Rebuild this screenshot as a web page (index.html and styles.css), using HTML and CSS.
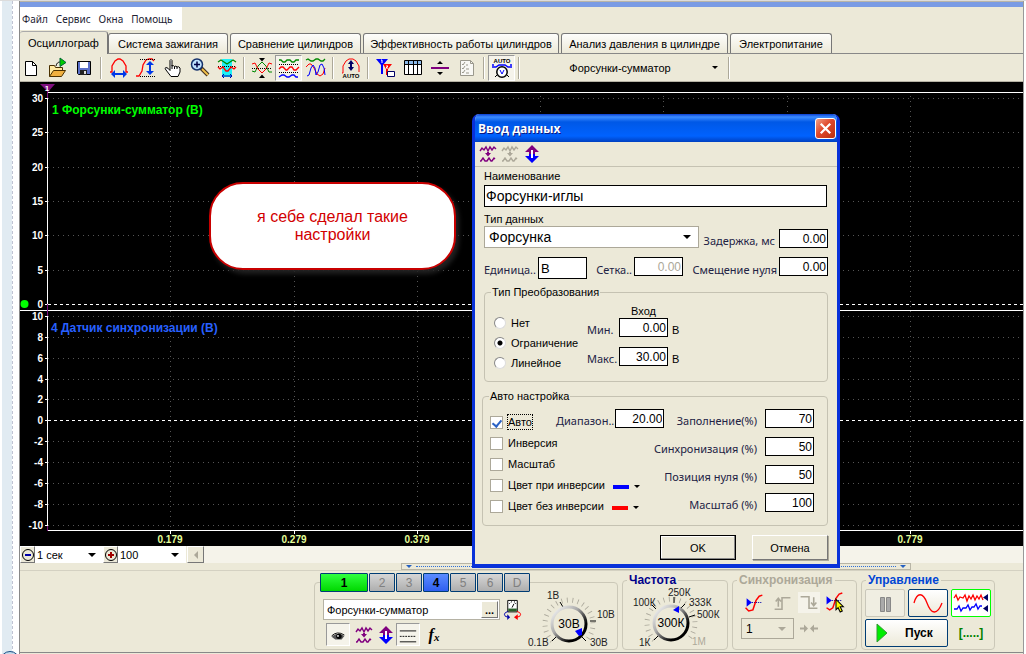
FILE: index.html
```html
<!DOCTYPE html>
<html lang="ru">
<head>
<meta charset="utf-8">
<title>Осциллограф</title>
<link rel="stylesheet" href="styles.css">
</head>
<body>
<svg class="defs" aria-hidden="true">
  <symbol id="i-waves" viewBox="0 0 18 18"><g fill="none" stroke="currentColor" stroke-width="1.4"><path d="M1 6l2-3 2 2 2-3 2 4 2-4 2 3 2-3 2 2"/><path d="M1 16h1l2-3 2 3h2l2-3 2 3h1l2-3 1 1"/></g><path d="M8 7h2v1h2L9 11.500 6 8h2z" fill="currentColor"/></symbol>
  <symbol id="i-updown" viewBox="0 0 16 18"><path d="M8 0l7 7h-4v2H5V7H1z" fill="#80007f"/><path d="M8 18l7-7h-4V9H5v2H1z" fill="#00f"/><path d="M7 5h2v8H7z" fill="#fff"/></symbol>
</svg>
<div class="page">
  <div class="edge"><span class="edge-knob"></span></div>
  <main class="app">
    <div class="titlebar"></div>
    <nav class="menu"><button>Файл</button><button>Сервис</button><button>Окна</button><button>Помощь</button></nav>
    <div class="tabs">
      <button class="tab tab-active">Осциллограф</button>
      <button class="tab tab-ign">Система зажигания</button>
      <button class="tab tab-cmp">Сравнение цилиндров</button>
      <button class="tab tab-eff">Эффективность работы цилиндров</button>
      <button class="tab tab-prs">Анализ давления в цилиндре</button>
      <button class="tab tab-pow">Электропитание</button>
    </div>
    <div class="toolbar">
      <button class="tool tool-first" aria-label="Новый"><svg viewBox="0 0 22 22"><path d="M3.500 4.500h7l4 4v10h-11z" fill="#fff" stroke="#000"/><path d="M10.500 4.500v4h4" fill="none" stroke="#000"/></svg></button>
      <button class="tool" aria-label="Открыть"><svg viewBox="0 0 22 22"><path d="M3.500 19.500v-11h5l1 2h7v4" fill="#ffe9a0" stroke="#4a3000"/><path d="M3.500 19.500l4-6h12l-4 6z" fill="#f0b040" stroke="#4a3000"/><path d="M10 9c1-4 3-4 5-4" stroke="#000" fill="none"/><path d="M14 1l6 4.500-6 4z" fill="#0c0" stroke="#063"/></svg></button>
      <button class="tool" aria-label="Сохранить"><svg viewBox="0 0 22 22"><path d="M4.500 4.500h13v13h-12l-1-1z" fill="#5a6fc8" stroke="#000"/><path d="M7 5h8v6H7z" fill="#fff"/><path d="M7 13h7v5H7z" fill="#222"/><path d="M11 14h2v3h-2z" fill="#ddd"/></svg></button>
      <span class="sep"></span>
      <button class="tool" aria-label="По ширине"><svg viewBox="0 0 22 22"><path d="M2 15h2V9l3-5 3-2h2l3 2 3 5v6h2" fill="none" stroke="#f00" stroke-width="1.300"/><path d="M3 17l4-4v3h8v-3l4 4-4 4v-3H7v3z" fill="#0038e8"/></svg></button>
      <button class="tool" aria-label="По высоте"><svg viewBox="0 0 22 22"><path d="M1 19h3l3-5 1-6 3-5 3-1h3l2 2" fill="none" stroke="#f00" stroke-width="1.300"/><path d="M5 2.500h15M5 19.500h15" stroke="#000" stroke-dasharray="1 1"/><path d="M15 4l4 4h-3v6h3l-4 4-4-4h3V8h-3z" fill="#0038e8"/></svg></button>
      <button class="tool" aria-label="Рука"><svg viewBox="0 0 22 22"><path d="M8 13V3.500q1-2 2 0V9q1.500-1 2.500.5 1.500-1 2.500.5 2-1 3 1v4l-2 4.500H9L4 13q-2-2 0-2.500 2 0 4 3z" fill="#fff" stroke="#000"/><path d="M10 8v4M12.500 9.500V12M15 10v2" stroke="#000"/></svg></button>
      <button class="tool" aria-label="Увеличить"><svg viewBox="0 0 22 22"><path d="M12 11l7 7" stroke="#432" stroke-width="4"/><path d="M13 12l6 6" stroke="#f3c24a" stroke-width="1.800"/><circle cx="8" cy="7.500" r="5.500" fill="#bfe2ff" stroke="#14306a" stroke-width="1.500"/><path d="M5 7.500h6M8 4.500v6" stroke="#004" stroke-width="1.500"/></svg></button>
      <button class="tool" aria-label="Область"><svg viewBox="0 0 22 22"><path d="M6 2h10v18H6z" fill="#1df1f5"/><path d="M2 5l3-2 3 2 3 2 3-2 3-2 3 2" fill="none" stroke="#080" stroke-width="1.300"/><path d="M2 9.500h18" stroke="#000" stroke-dasharray="1 1"/><path d="M2 10l2 2 3-2 3 4h2l3-4 3 2 2-2" fill="none" stroke="#f00" stroke-width="1.300"/><path d="M7 19h8M8 17l-2 2 2 2M14 17l2 2-2 2" fill="none" stroke="#00a"/></svg></button>
      <span class="sep"></span>
      <button class="tool" aria-label="Наложение"><svg viewBox="0 0 22 22"><path d="M1 14l3 1 3-6 4-4 4 4 3 6 3 0" fill="none" stroke="#080"/><path d="M1 7l3-1 3 6 4 4 4-4 3-6 3 1" fill="none" stroke="#f00"/><path d="M1 11.500h20" stroke="#000" stroke-dasharray="1 1"/><path d="M8 1h6l-3 3.500zM8 21h6l-3-3.500z"/></svg></button>
      <button class="tool tool-on" aria-label="Раздельно"><svg viewBox="0 0 22 22"><g fill="none" stroke-width="1.300"><path d="M1 3h2l2 2h2l2-2h3l2 2h2l2-2h3" stroke="#080"/><path d="M1 12l2-2h2l3 3h1l3-3h2l2 3h2l3-3" stroke="#f00"/><path d="M1 20l3-2h2l3 2h2l3-2h2l2 2h2" stroke="#00f"/></g><path d="M1 7.500h20M1 15.500h20" stroke="#000" stroke-dasharray="1 1"/></svg></button>
      <button class="tool" aria-label="Вместе"><svg viewBox="0 0 22 22"><g fill="none"><path d="M1 3l2-1 3 2h2l3-2h2l3 2h2l2-2" stroke="#080" stroke-width="1.300"/><path d="M1 10l3-3h2l3 4 3 6 3 2 3-2 2-6" stroke="#f00"/><path d="M2 19l2-1 2-7 2-3 2 3 1 7 2-3 2-7 2-1 2 4 1 7" stroke="#00f"/></g></svg></button>
      <span class="sep"></span>
      <button class="tool" aria-label="Авто масштаб"><svg viewBox="0 0 22 22"><path d="M2 16h1V9l3-5 3-2h4l3 2 3 5v6" fill="none" stroke="#f00"/><path d="M11 3l3 4h-2v3h2l-3 4-3-4h2V7H8z" fill="#006"/><text x="11" y="21" class="t-auto">AUTO</text></svg></button>
      <span class="sep"></span>
      <button class="tool" aria-label="Маркеры"><svg viewBox="0 0 22 22"><path d="M1 2h12L8 8v9H6V8z" fill="#00f"/><path d="M8 7h9l-4 5v6h-2v-6z" fill="#f00"/><path d="M12.500 14.500h7v5h-7z" fill="#fff" stroke="#006"/><path d="M6 3h1v3M11 9h2l-2 2h2" fill="none" stroke="#fff"/></svg></button>
      <button class="tool" aria-label="Таблица"><svg viewBox="0 0 22 22"><path d="M2.500 3.500h17v14h-17z" fill="#fff" stroke="#000"/><path d="M3 4h16v3H3z" fill="#8ab8e8"/><path d="M2.500 7.500h17M6.500 4v13M11.500 4v13M15.500 4v13" stroke="#000"/></svg></button>
      <button class="tool" aria-label="Линия"><svg viewBox="0 0 22 22"><path d="M2 11h18" stroke="#80007f" stroke-width="2"/><path d="M8 7h6l-3-3zM8 15h6l-3 3z"/></svg></button>
      <button class="tool" aria-label="Отчёт"><svg viewBox="0 0 22 22"><path d="M4.500 3.500h10l3 3v12h-13z" fill="#f8f8f4" stroke="#9a988c"/><path d="M14.500 3.500v3h3M6 7l1 1 2-3M6 11l1 1 2-3M6 15l1 1 2-3M10 8h2M10 12h3M10 16h3" fill="none" stroke="#9a988c"/></svg></button>
      <span class="sep"></span>
      <button class="tool tool-on" aria-label="Авто вольтметр"><svg viewBox="0 0 22 22"><text x="11" y="6" class="t-auto">AUTO</text><path d="M3 10h2l3-2h6l3 2h2M2 7v4M20 7v4" fill="none" stroke="#00f" stroke-width="1.500"/><circle cx="11" cy="15" r="5.200" fill="#fff" stroke="#000" stroke-width="1.500"/><path d="M9 13l2 4 2-4" fill="none" stroke="#00f"/><path d="M4 20l2-2M18 20l-2-2" stroke="#000"/></svg></button>
      <span class="sep"></span>
      <span class="pick pick-flat"><select aria-label="Профиль"><option>Форсунки-сумматор</option></select></span>
      <span class="sep"></span>
    </div>

    <section class="chart">
      <svg class="plot" width="100%" height="464">
        <g class="grid">
          <line x1="28" x2="100%" y1="16.500" y2="16.500"/><line x1="28" x2="100%" y1="50.500" y2="50.500"/><line x1="28" x2="100%" y1="85.500" y2="85.500"/><line x1="28" x2="100%" y1="119.500" y2="119.500"/><line x1="28" x2="100%" y1="153.500" y2="153.500"/><line x1="28" x2="100%" y1="188.500" y2="188.500"/>
          <line x1="28" x2="100%" y1="234.500" y2="234.500"/><line x1="28" x2="100%" y1="255.500" y2="255.500"/><line x1="28" x2="100%" y1="276.500" y2="276.500"/><line x1="28" x2="100%" y1="297.500" y2="297.500"/><line x1="28" x2="100%" y1="317.500" y2="317.500"/><line x1="28" x2="100%" y1="359.500" y2="359.500"/><line x1="28" x2="100%" y1="380.500" y2="380.500"/><line x1="28" x2="100%" y1="401.500" y2="401.500"/><line x1="28" x2="100%" y1="422.500" y2="422.500"/><line x1="28" x2="100%" y1="443.500" y2="443.500"/>
          <line x1="150.500" x2="150.500" y1="14" y2="448"/><line x1="274.500" x2="274.500" y1="14" y2="448"/><line x1="397.500" x2="397.500" y1="14" y2="448"/><line x1="520.500" x2="520.500" y1="14" y2="448"/><line x1="643.500" x2="643.500" y1="14" y2="448"/><line x1="767.500" x2="767.500" y1="14" y2="448"/><line x1="890.500" x2="890.500" y1="14" y2="448"/>
        </g>
        <g class="zero"><line x1="28" x2="100%" y1="222.500" y2="222.500"/><line x1="28" x2="100%" y1="338.500" y2="338.500"/></g>
        <g class="frame">
          <line x1="27" x2="100%" y1="10.500" y2="10.500"/><line x1="0" x2="100%" y1="228.500" y2="228.500"/><line x1="27" x2="100%" y1="448.500" y2="448.500"/><line x1="27.500" x2="27.500" y1="10" y2="449"/>
          <path d="M25 16.500h3M25 50.500h3M25 85.500h3M25 119.500h3M25 153.500h3M25 188.500h3M25 222.500h3M25 234.500h3M25 255.500h3M25 276.500h3M25 297.500h3M25 317.500h3M25 338.500h3M25 359.500h3M25 380.500h3M25 401.500h3M25 422.500h3M25 443.500h3"/>
          <path d="M150.500 449v3M274.500 449v3M397.500 449v3M890.500 449v3"/>
        </g>
        <path d="M20 2h15l-7 8z" fill="#80107f"/><path d="M27.500 9v7M27.500 222v12M27.500 444v5" stroke="#80107f"/>
        <text x="27" y="9" class="t-mark">1</text>
        <circle cx="4.500" cy="222" r="4" fill="#0f0"/>
        <g class="scale-y">
          <text x="23" y="20">30</text><text x="23" y="54">25</text><text x="23" y="89">20</text><text x="23" y="123">15</text><text x="23" y="157">10</text><text x="23" y="192">5</text><text x="23" y="226">0</text>
          <text x="23" y="238">10</text><text x="23" y="259">8</text><text x="23" y="280">6</text><text x="23" y="301">4</text><text x="23" y="321">2</text><text x="23" y="342">0</text><text x="23" y="363">-2</text><text x="23" y="384">-4</text><text x="23" y="405">-6</text><text x="23" y="426">-8</text><text x="23" y="447">-10</text>
        </g>
        <g class="scale-x"><text x="150" y="461">0.179</text><text x="274" y="461">0.279</text><text x="397" y="461">0.379</text><text x="890" y="461">0.779</text></g>
        <text x="32" y="32" class="ch ch-1">1 Форсунки-сумматор (В)</text>
        <text x="31" y="250" class="ch ch-4">4 Датчик синхронизации (В)</text>
      </svg>
      <div class="callout">я себе сделал такие<br>настройки</div>
    </section>

    <div class="scrollrow">
      <button class="mini" aria-label="Уменьшить"><svg viewBox="0 0 14 14"><circle cx="7" cy="7" r="5.500" fill="none" stroke="#000"/><path d="M4 7h6" stroke="#00a" stroke-width="2"/></svg></button>
      <span class="pick pick-time"><select aria-label="Время"><option>1 сек</option></select></span>
      <button class="mini" aria-label="Увеличить"><svg viewBox="0 0 14 14"><circle cx="7" cy="7" r="5.500" fill="none" stroke="#000"/><path d="M4 7h6M7 4v6" stroke="#a00000" stroke-width="2"/></svg></button>
      <span class="pick pick-zoom"><select aria-label="Масштаб времени"><option>100</option></select></span>
      <button class="mini mini-left" aria-label="Влево"><svg viewBox="0 0 14 14"><path d="M9 3v8L5 7z" fill="#aca899"/></svg></button>
      <div class="track"></div>
    </div>
    <div class="splitter"><i></i><b></b><i></i></div>

    <div class="panel">
      <fieldset class="group group-ch">
        <legend class="chans"><button class="chan chan-1">1</button><button class="chan">2</button><button class="chan">3</button><button class="chan chan-4">4</button><button class="chan">5</button><button class="chan">6</button><button class="chan">D</button></legend>
        <div class="ch-body">
          <div class="ch-left">
            <div class="row">
              <span class="namebox"><input value="Форсунки-сумматор" aria-label="Имя канала"><button aria-label="Выбрать">...</button></span>
              <svg class="i20" viewBox="0 0 20 22"><path d="M4.500 1.500h10v12h-10z" fill="#fff" stroke="#000"/><path d="M5 10h9v3H5z" fill="#286028"/><path d="M6 5l1-1M8 3h1M11 3h1M13 5l-1-1M9 9l2-4" stroke="#000"/><path d="M5 13q-4 1-4 3 0 3 4 3" fill="none" stroke="#00a"/><path d="M4 16l3 3-3 3z" fill="#00a"/><path d="M14 13q4 1 4 3 0 3-4 3" fill="none" stroke="#f00"/><path d="M15 16l-4 3 4 3z" fill="#f00"/></svg>
            </div>
            <div class="row row-ic">
              <button class="ico ico-on" aria-label="Показать"><svg viewBox="0 0 22 22"><path d="M4 13q6-6 14-1l-3 4H8z" fill="#555"/><path d="M4 12q6-6 14-1" fill="none" stroke="#000"/><circle cx="12" cy="12.500" r="3"/><circle cx="11" cy="12" r="1" fill="#fff"/></svg></button>
              <button class="ico purple" aria-label="Сигналы"><svg class="s18"><use href="#i-waves"/></svg></button>
              <button class="ico ico-slim" aria-label="Высота"><svg class="s18"><use href="#i-updown"/></svg></button>
              <button class="ico ico-on" aria-label="Линии"><svg viewBox="0 0 22 22"><path d="M2 6.500h18M2 18.500h18" stroke="#000"/><path d="M2 12.500h18" stroke="#000" stroke-dasharray="2 1"/></svg></button>
              <button class="ico fx">f<sub>x</sub></button>
            </div>
          </div>
          <svg class="knob" width="90" height="66" viewBox="0 0 90 66">
            <defs><linearGradient id="ring" x1="0" y1="0" x2="1" y2="1"><stop offset="0" stop-color="#fff"/><stop offset=".4" stop-color="#aaa"/><stop offset=".75" stop-color="#000"/></linearGradient></defs>
            <path class="ticks" pathLength="270" d="M25 56A24 24 0 1 1 59 56"/>
            <path class="major" d="M25 56l4-4M59 56l-4-4M33 17l3 5M63 36h6"/>
            <circle class="disc" cx="42" cy="39" r="17"/><path d="M48 46l7-3v7l-3 1z" fill="#00f"/>
            <text class="val" x="42" y="43">30В</text>
            <text x="20" y="14">1В</text><text x="70" y="33">10В</text><text x="63" y="61">30В</text><text x="1" y="61">0.1В</text>
          </svg>
        </div>
      </fieldset>
      <fieldset class="group group-freq">
        <legend class="navy">Частота</legend>
        <svg class="knob" width="94" height="66" viewBox="0 0 94 66">
          <path class="ticks" pathLength="270" d="M25 56A24 24 0 1 1 59 56"/>
          <path class="major" d="M25 56l4-4M23 21l4 4M45 13v6M56 20l-4 4M66 31l-6 2"/>
          <circle class="disc" cx="42" cy="39" r="17"/><path d="M44 26l6-4v7z" fill="#00f"/>
          <text class="val" x="42" y="43">300К</text>
          <text x="4" y="22">100К</text><text x="39" y="12">250К</text><text x="60" y="22">333К</text><text x="68" y="34">500К</text><text x="10" y="62">1К</text><text x="63" y="61" class="off">1М</text>
        </svg>
      </fieldset>
      <fieldset class="group group-sync">
        <legend class="dim">Синхронизация</legend>
        <div class="sync-icons">
          <svg viewBox="0 0 20 20"><path d="M2 6l5 4-5 4z" fill="#00f"/><path d="M7 10h10" stroke="#00a" stroke-dasharray="1 1"/><path d="M1 15l3 3 4-1 3-9 3-4 3-1" fill="none" stroke="#f00" stroke-width="1.400"/></svg>
          <svg viewBox="0 0 20 20"><path d="M3 16.500h7v-11h8M6.500 14V6M4 9l2.500-3L9 9" fill="none" stroke="#aca899" stroke-width="1.500"/></svg>
          <svg class="hatch" viewBox="0 0 20 20"><path d="M2 4.500h8v11h8M14.500 5v7M12 10l2.500 3L17 10" fill="none" stroke="#aca899" stroke-width="1.500"/></svg>
          <svg viewBox="0 0 20 20"><path d="M1 4l5 4-5 4z" fill="#00f"/><path d="M6 8h10" stroke="#00a" stroke-dasharray="1 1"/><path d="M1 15l3 2 3-2 3-9 3-4 3-1" fill="none" stroke="#f00" stroke-width="1.400"/><path d="M10 7l7 7h-3l2 4-2 1-2-4-2 2z" fill="#ff0" stroke="#000"/></svg>
        </div>
        <div class="row">
          <span class="pick pick-sync"><select aria-label="Канал синхронизации"><option>1</option></select></span>
          <svg class="i20" viewBox="0 0 20 20"><path d="M1 9h4V6l4 4-4 4v-3H1zM19 9h-4V6l-4 4 4 4v-3h4z" fill="#aca899"/></svg>
        </div>
      </fieldset>
      <fieldset class="group group-ctl">
        <legend class="blue">Управление</legend>
        <div class="ctl">
          <button class="cb cb-off" aria-label="Пауза"><svg viewBox="0 0 38 26"><path d="M14.500 7.500h4v14h-4zM20.500 7.500h4v14h-4z" fill="#aaa" stroke="#888"/></svg></button>
          <button class="cb" aria-label="Сигнал"><svg viewBox="0 0 38 26"><path d="M5 13C8 2 14 2 18 13S28 26 33 13" fill="none" stroke="#f00" stroke-width="1.300"/></svg></button>
          <button class="cb cb-green" aria-label="Поток"><svg viewBox="0 0 38 26"><path d="M2 8l2-3 2 5 2-3 3 1 2-3 2 6 2-5 2 3 2-4 2 5 2-4 2 3 2-4 2 5" fill="none" stroke="#f00" stroke-width="1.300"/><path d="M2 19h3l2-3 2 5 2-3h3l2-3 2 5 2-3h2l2-3 2 5 2-3h2" fill="none" stroke="#00f" stroke-width="1.300"/><path d="M36 4v7l-5-3.500zM36 15v7l-5-3.500z" fill="#006"/></svg></button>
          <button class="cb cb-run"><svg viewBox="0 0 14 20"><path d="M2 1l10 9-10 9z" fill="#0e0" stroke="#393"/></svg><span>Пуск</span></button>
          <span class="brackets">[.....]</span>
        </div>
      </fieldset>
    </div>
    <div class="status"></div>
  </main>
</div>

<form class="dialog">
  <header class="d-title"><h1>Ввод данных</h1><button type="button" class="close" aria-label="Закрыть"><svg viewBox="0 0 20 20"><path d="M5 5l10 10M15 5L5 15" stroke="#fff" stroke-width="2.400"/></svg></button></header>
  <div class="d-tools"><svg class="s18 purple"><use href="#i-waves"/></svg><svg class="s18 grey"><use href="#i-waves"/></svg><svg class="s18"><use href="#i-updown"/></svg></div>
  <div class="d-body">
    <label class="cap" for="nm">Наименование</label>
    <input id="nm" class="box big" value="Форсунки-иглы">
    <label class="cap cap-type" for="tp">Тип данных</label>
    <div class="line line-type">
      <span class="pick pick-type"><select id="tp"><option>Форсунка</option></select></span>
      <label class="tl push" for="dl">Задержка, мс</label><input id="dl" class="box num" value="0.00">
    </div>
    <div class="line line-unit">
      <label class="tl" for="un">Единица..</label><input id="un" class="box unit" value="В">
      <label class="tl push" for="gr">Сетка..</label><input id="gr" class="box num" value="0.00" disabled>
      <label class="tl push" for="zs">Смещение нуля</label><input id="zs" class="box num" value="0.00">
    </div>
    <fieldset class="fs fs-conv">
      <legend>Тип Преобразования</legend>
      <div class="radios">
        <label><input type="radio" name="c">Нет</label>
        <label><input type="radio" name="c" checked>Ограничение</label>
        <label><input type="radio" name="c">Линейное</label>
      </div>
      <div class="limits">
        <span></span><span class="in-head">Вход</span><span></span>
        <label class="tl" for="mn">Мин.</label><input id="mn" class="box num" value="0.00"><span>В</span>
        <label class="tl" for="mx">Макс.</label><input id="mx" class="box num" value="30.00"><span>В</span>
      </div>
    </fieldset>
    <fieldset class="fs fs-auto">
      <legend>Авто настройка</legend>
      <div class="checks">
        <label><input type="checkbox" checked><span class="focus">Авто</span></label>
        <label><input type="checkbox">Инверсия</label>
        <label><input type="checkbox">Масштаб</label>
        <label><input type="checkbox">Цвет при инверсии<i class="swatch sw-blue"></i></label>
        <label><input type="checkbox">Цвет без инверсии<i class="swatch sw-red"></i></label>
      </div>
      <div class="params">
        <div class="prow"><label class="tl" for="rg">Диапазон..</label><input id="rg" class="box num" value="20.00"><label class="tl push" for="fl">Заполнение(%)</label><input id="fl" class="box num last" value="70"></div>
        <div class="prow"><label class="tl push" for="sy">Синхронизация (%)</label><input id="sy" class="box num last" value="50"></div>
        <div class="prow"><label class="tl push" for="zp">Позиция нуля (%)</label><input id="zp" class="box num last" value="50"></div>
        <div class="prow"><label class="tl push" for="sc">Масштаб (%)</label><input id="sc" class="box num last" value="100"></div>
      </div>
    </fieldset>
    <div class="d-buttons"><button type="button" class="btn btn-def">OK</button><button type="button" class="btn">Отмена</button></div>
  </div>
</form>
</body>
</html>
```
FILE: styles.css
```css
* { box-sizing: border-box; }
body {
  margin: 0;
  position: relative;
  background: #fff;
  color: #000;
  font: 11px/14px "Liberation Sans", Arial, sans-serif;
  overflow: hidden;
}
button, input, select { font: inherit; color: inherit; margin: 0; padding: 0; border: 0; background: none; border-radius: 0; }
svg { display: block; flex: none; }
.defs { position: absolute; width: 0; height: 0; }
fieldset { margin: 0; min-width: 0; }

.page { display: flex; min-height: 100vh; border-top: 1px solid #dcdcdc; }
.edge {
  position: relative;
  flex: none;
  width: 19px;
  background: linear-gradient(90deg, #fff 2px, #e1ebf2 2px, #e1ebf2 12px, #fff 12px);
}
.edge::after { content: ""; position: absolute; left: 12px; top: 0; bottom: 0; border-left: 1px dashed #c0c4d4; }
.edge-knob { position: absolute; z-index: 1; left: 0; bottom: -17px; width: 20px; height: 20px; border: 1px solid #1a4f86; border-radius: 50%; background: #c6dbea; }
.app { flex: 1; min-width: 0; display: flex; flex-direction: column; background: #ece9d8; border-left: 1px solid #888; border-right: 1px solid #999; margin-right: 2px; }
.titlebar { height: 6px; background: #7a9be4; border-top: 1px solid #b8b4a8; }
.menu { align-self: flex-start; display: flex; gap: 8px; width: 162px; height: 23px; padding: 0 2px; background: #fff; font-family: "Noto Sans", sans-serif; font-size: 10px; color: #223; white-space: nowrap; }

.tabs { display: flex; align-items: flex-end; height: 24px; gap: 2px; border-bottom: 1px solid #888; }
.tab { height: 20px; border: 1px solid #777; border-bottom: 0; border-radius: 3px 3px 0 0; background: linear-gradient(#fdfdfb, #ece9d8); white-space: nowrap; }
.tab-active { width: 88px; height: 23px; margin: 0 -2px -1px 0; border-left: 0; border-top-color: #aaa; background: #ece9d8; }
.tab-ign { width: 120px; }
.tab-cmp { width: 131px; }
.tab-eff { width: 196px; }
.tab-prs { width: 167px; }
.tab-pow { width: 102px; }

.toolbar { display: flex; align-items: center; height: 28px; padding-left: 2px; border-bottom: 1px solid #b5b2a4; }
.tool { display: flex; justify-content: center; align-items: center; width: 27px; height: 26px; }
.tool svg { width: 22px; height: 22px; }
.tool-first { width: 21px; justify-content: flex-start; }
.tool-on { border: 1px solid; border-color: #999 #fff #fff #999; background: #f5f3ea; }
.sep { width: 8px; height: 22px; background: linear-gradient(#aca899, #aca899) 3px 0 / 1px 100% no-repeat, linear-gradient(#fff, #fff) 4px 0 / 1px 100% no-repeat; }
.t-auto { font: bold 6px "Liberation Sans", sans-serif; text-anchor: middle; }

.pick { position: relative; display: block; }
.pick select { width: 100%; height: 100%; appearance: none; outline: 0; line-height: normal; }
.pick::after { content: ""; position: absolute; right: 7px; top: 50%; margin-top: -2px; border: 4px solid transparent; border-top-color: #000; border-bottom: 0; pointer-events: none; }
.pick-flat { width: 202px; height: 24px; }
.pick-flat select { text-align-last: center; padding-right: 8px; }
.pick-flat::after { border-width: 3px 3px 0; }

.chart { position: relative; background: #000; }
.plot { overflow: hidden; }
.grid { stroke: #555; stroke-dasharray: 1 4; }
.zero { stroke: #fff; stroke-dasharray: 3 3; }
.frame { stroke: #fff; fill: none; }
.scale-y { fill: #fff; font: bold 10px "Liberation Sans", sans-serif; text-anchor: end; }
.scale-x { fill: #e6ff9a; font: bold 10px "Liberation Sans", sans-serif; text-anchor: middle; }
.t-mark { fill: #fff; font: bold 8px "Liberation Sans", sans-serif; text-anchor: middle; }
.ch { font: bold 12px "Liberation Sans", sans-serif; }
.ch-1 { fill: #0f0; }
.ch-4 { fill: #2860ff; }
.callout {
  position: absolute; left: 189px; top: 100px; width: 247px; height: 88px; padding-top: 24px;
  border: 2px solid #c80000; border-radius: 34px; background: #fff; color: #d20000;
  font-size: 16px; line-height: 18px; text-align: center; box-shadow: 3px 4px 5px #222;
}

.scrollrow { display: flex; height: 17px; }
.mini { display: flex; align-items: center; justify-content: center; width: 15px; border: 1px solid; border-color: #fff #777 #777 #fff; background: #ece9d8; }
.mini svg { width: 14px; height: 14px; }
.mini-left { width: 17px; margin-left: 1px; }
.pick-time, .pick-zoom { width: 68px; background: #fff; }
.pick-time select, .pick-zoom select { padding-left: 2px; }
.track { flex: 1; background: #f5f3ea; }

.splitter { display: flex; align-items: center; align-self: flex-end; width: 510px; height: 7px; margin-right: 112px; padding: 0 4px; border: 1px solid #b8b5a6; gap: 4px; }
.splitter i { border: 3px solid transparent; border-top-color: #2560c0; border-bottom: 0; }
.splitter b { flex: 1; border-top: 1px dotted #2f6fd8; }

.panel { display: flex; justify-content: flex-end; gap: 4px; height: 82px; padding: 2px 28px 2px 0; border-top: 1px solid #d4d1c2; }
.group { border: 1px solid #cbc8b8; border-radius: 4px; padding: 0; height: 77px; }
.group legend { padding: 0 2px; margin-left: 4px; font-weight: bold; font-size: 12px; }
.navy { color: #00008b; }
.dim { color: #aca899; }
.blue { color: #0046d5; }
.group-ch { width: 304px; }
.group-freq { width: 106px; }
.group-sync { width: 125px; }
.group-ctl { width: 134px; }
.group .chans { display: flex; gap: 1px; padding: 0; margin-left: 5px; font-weight: normal; }
.chan { width: 26px; height: 19px; border: 1px solid #003c74; border-radius: 1px; background: linear-gradient(#d6d6d6, #aeaeae); color: #808080; font-size: 12px; }
.chan-1 { width: 48px; background: linear-gradient(#30ff40, #00d800); color: #000; font-weight: bold; }
.chan-4 { background: linear-gradient(#5c8cff, #2f5ff0); color: #000; font-weight: bold; }
.ch-body { display: flex; justify-content: space-between; margin-top: -7px; }
.ch-left { padding: 14px 0 0 8px; }
.row { display: flex; align-items: center; gap: 3px; }
.namebox { display: flex; width: 177px; height: 21px; padding: 1px; border: 1px solid #b5b2a4; background: #fff; }
.namebox input { flex: 1; min-width: 0; padding-left: 2px; }
.namebox button { width: 17px; border: 1px solid; border-color: #fff #777 #777 #fff; background: #ece9d8; font-weight: bold; line-height: 8px; }
.i20 { width: 20px; height: 21px; }
.row-ic { gap: 2px; margin-top: 3px; padding-left: 3px; }
.ico { display: flex; align-items: center; justify-content: center; width: 24px; height: 23px; }
.ico svg { width: 22px; height: 20px; }
.ico-slim { width: 16px; }
.ico .s18, .s18 { width: 18px; height: 18px; }
.ico-on { border: 1px solid; border-color: #999 #fff #fff #999; background: #f5f3ea; }
.purple { color: #80007f; }
.grey { color: #aca899; }
.fx { font: italic bold 16px "Liberation Serif", serif; }
.fx sub { font-size: 11px; vertical-align: baseline; padding-top: 4px; }
.knob { font-size: 10px; fill: #222; }
.ticks { fill: none; stroke: #aaa79a; stroke-width: 5; stroke-dasharray: 2 11; }
.major { fill: none; stroke: #000; }
.disc { fill: #ece9d8; stroke: url(#ring); stroke-width: 3; }
.val { font-size: 12px; text-anchor: middle; fill: #000; }
.off { fill: #aca899; }
.group-freq .knob { margin: -3px 0 0 6px; }
.sync-icons { display: flex; gap: 5px; padding: 5px 0 0 11px; }
.sync-icons svg { width: 22px; height: 21px; }
.hatch { background: #f5f3ea; }
.group-sync .row { padding: 5px 0 0 8px; gap: 5px; }
.pick-sync { width: 53px; height: 21px; border: 1px solid #aca899; font-size: 12px; }
.pick-sync select { padding-left: 4px; }
.pick-sync::after { border-top-color: #aca899; }
.ctl { display: grid; grid-template-columns: 40px 40px 40px; gap: 2px 3px; padding: 2px 0 0 3px; }
.cb { height: 28px; border: 1px solid #003c74; background: linear-gradient(#fff, #ece9d8); border-radius: 2px; }
.cb-off { border-color: #c9c7ba; background: #f0eee2; }
.cb-green { border: 1px solid #0f0; background: #fff; }
.cb svg { width: 100%; height: 100%; }
.cb-run { grid-column: span 2; display: flex; align-items: center; gap: 16px; padding-left: 9px; font-weight: bold; font-size: 12px; }
.cb-run svg { width: 14px; height: 20px; }
.brackets { align-self: center; text-align: center; color: #008000; font-weight: bold; font-size: 12px; }
.status { flex: 1; border-top: 1px solid #888; }

.dialog { position: absolute; left: 472px; top: 114px; width: 368px; border: 3px solid #0831d9; border-top: 0; border-bottom-width: 4px; border-radius: 7px 7px 0 0; background: #ece9d8; overflow: hidden; }
.d-title { display: flex; justify-content: space-between; align-items: center; height: 28px; margin: 0 -1px; padding: 0 2px 0 4px; background: linear-gradient(#0a3fd0, #3c8cff 3px, #0058e6 8px, #0062ff 22px, #0040c0); }
.d-title h1 { margin: 0; color: #fff; font: bold 12px "Open Sans", sans-serif; text-shadow: 1px 1px #0a1883; }
.close { width: 21px; height: 21px; border: 1px solid #fff; border-radius: 3px; background: linear-gradient(135deg, #f0a088, #e0482a 45%, #b83010); }
.d-tools { display: flex; align-items: center; gap: 4px; height: 25px; padding-left: 4px; border-bottom: 1px solid #c5c2b2; }
.d-body { display: flex; flex-direction: column; padding: 2px 9px 4px; }
.cap { height: 16px; }
.box { border: 1px solid #000; background: #fff; outline: 0; }
.big { height: 22px; width: 343px; padding-left: 1px; font-size: 14px; }
.num { width: 49px; height: 19px; padding-right: 1px; text-align: right; font-size: 12px; }
.num:disabled { color: #aca899; }
.unit { width: 49px; height: 22px; padding-left: 2px; font-size: 13px; }
.cap-type { margin-top: 5px; height: 14px; }
.tl { font-family: "Noto Sans", sans-serif; color: #224; white-space: nowrap; line-height: 14px; }
.push { margin-left: auto; }
.line { display: flex; gap: 4px; }
.line-type { align-items: flex-end; }
.pick-type { width: 215px; height: 22px; border: 1px solid #aca899; background: #fff; font-size: 14px; }
.pick-type select { padding-left: 4px; }
.line-unit { align-items: flex-start; margin-top: 9px; gap: 2px; }
.line-unit .tl { margin-top: 6px; }
.fs { display: flex; border: 1px solid #c5c2b2; border-radius: 4px; padding: 0; }
.fs legend { margin-left: 6px; padding: 0 1px; }
.fs-conv { height: 97px; margin-top: 6px; }
.radios, .checks { display: flex; flex-direction: column; }
.radios { width: 102px; padding: 17px 0 0 9px; gap: 6px; }
.radios label, .checks label { display: flex; align-items: center; height: 14px; white-space: nowrap; gap: 5px; }
.radios input { appearance: none; width: 12px; height: 12px; border-radius: 50%; border: 1px solid #888; border-right-color: #ddd; border-bottom-color: #ddd; background: #fff; }
.radios input:checked { background: radial-gradient(#000 2px, #fff 3px); }
.limits { display: grid; grid-template-columns: 28px 49px 12px; gap: 10px 4px; align-items: end; align-content: start; padding-top: 5px; }
.in-head { text-align: center; margin-bottom: -10px; }
.fs-auto { height: 137px; margin: 7px 0 0 -2px; }
.checks { width: 0; padding: 12px 0 0 7px; gap: 7px; }
.checks input { flex: none; appearance: none; width: 13px; height: 13px; border: 1px solid #aca899; background: #fff; }
.checks input:checked::before { content: ""; display: block; width: 4px; height: 7px; margin: 1px 0 0 3px; border: solid #2b62c4; border-width: 0 2px 2px 0; transform: rotate(40deg); }
.focus { outline: 1px dotted #000; }
.swatch { position: relative; flex: none; width: 16px; height: 4px; margin: 3px 0 0 3px; background: #00f; }
.sw-red { background: #f00; }
.swatch::after { content: ""; position: absolute; left: 21px; top: 0; border: 3px solid transparent; border-top-color: #000; border-bottom: 0; }
.params { display: flex; flex-direction: column; gap: 9px; flex: 1; padding: 6px 13px 0 66px; pointer-events: none; }
.prow { display: flex; align-items: flex-end; gap: 1px; }
.last { margin-left: 7px; }
.d-buttons { display: flex; justify-content: flex-end; gap: 16px; padding-top: 9px; }
.btn { width: 76px; height: 25px; border: 1px solid; border-color: #fff #777 #777 #fff; box-shadow: 1px 1px #aca899; background: #ece9d8; }
.btn-def { border: 1px solid #000; box-shadow: inset -1px -1px #888, inset 1px 1px #fff; }
```
